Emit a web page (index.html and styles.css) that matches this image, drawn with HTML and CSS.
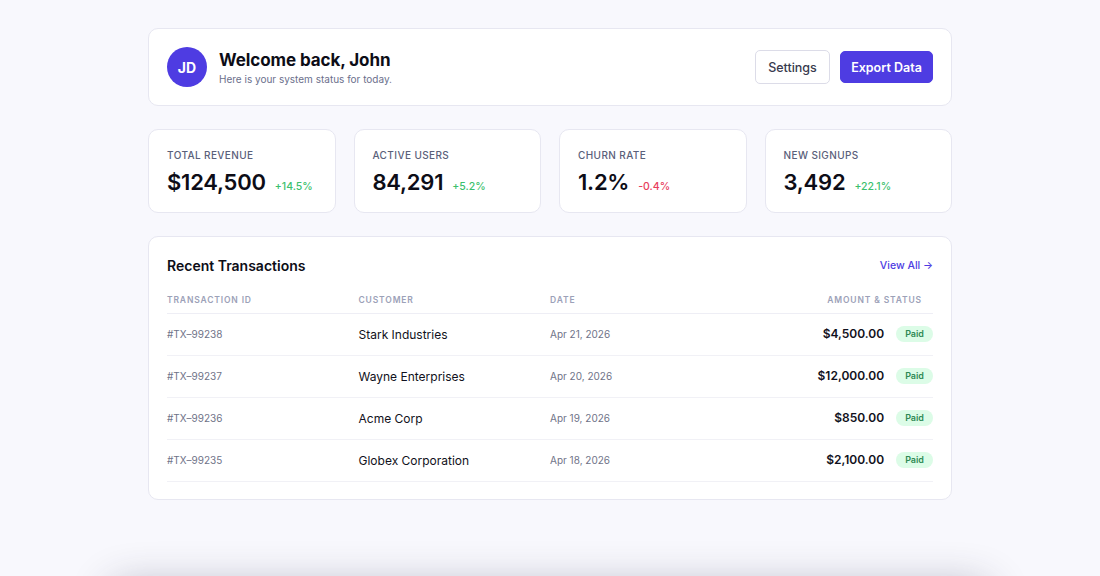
FILE: index.html
```html
<!DOCTYPE html>
<html>
<head>
<meta charset="utf-8">
<link rel="stylesheet" href="styles.css">
</head>
<body>
<main class="wrap">
  <header class="card header">
    <div class="who">
      <div class="avatar">JD</div>
      <div>
        <h1 class="title">Welcome back, John</h1>
        <p class="sub">Here is your system status for today.</p>
      </div>
    </div>
    <div class="actions">
      <button class="btn btn-ghost">Settings</button>
      <button class="btn btn-primary">Export Data</button>
    </div>
  </header>

  <section class="stats">
    <div class="card stat">
      <div class="label">Total Revenue</div>
      <div class="row"><span class="value">$124,500</span><span class="chg up">+14.5%</span></div>
    </div>
    <div class="card stat">
      <div class="label">Active Users</div>
      <div class="row"><span class="value">84,291</span><span class="chg up">+5.2%</span></div>
    </div>
    <div class="card stat">
      <div class="label">Churn Rate</div>
      <div class="row"><span class="value">1.2%</span><span class="chg down">-0.4%</span></div>
    </div>
    <div class="card stat">
      <div class="label">New Signups</div>
      <div class="row"><span class="value">3,492</span><span class="chg up">+22.1%</span></div>
    </div>
  </section>

  <section class="card tx">
    <div class="tx-head">
      <h2 class="tx-title">Recent Transactions</h2>
      <a class="link">View All →</a>
    </div>
    <table class="table">
      <thead>
        <tr><th>Transaction ID</th><th>Customer</th><th>Date</th><th class="th-r">Amount &amp; Status</th></tr>
      </thead>
      <tbody>
        <tr><td class="id">#TX–99238</td><td class="cust">Stark Industries</td><td class="date">Apr 21, 2026</td><td class="r"><span class="amt">$4,500.00</span><span class="pill">Paid</span></td></tr>
        <tr><td class="id">#TX–99237</td><td class="cust">Wayne Enterprises</td><td class="date">Apr 20, 2026</td><td class="r"><span class="amt">$12,000.00</span><span class="pill">Paid</span></td></tr>
        <tr><td class="id">#TX–99236</td><td class="cust">Acme Corp</td><td class="date">Apr 19, 2026</td><td class="r"><span class="amt">$850.00</span><span class="pill">Paid</span></td></tr>
        <tr><td class="id">#TX–99235</td><td class="cust">Globex Corporation</td><td class="date">Apr 18, 2026</td><td class="r"><span class="amt">$2,100.00</span><span class="pill">Paid</span></td></tr>
      </tbody>
    </table>
  </section>
</main>
<div class="below"></div>
</body>
</html>
```

FILE: styles.css
```css
* { box-sizing: border-box; }
html, body { margin: 0; padding: 0; }
body {
  background: #f8f8fd;
  font-family: Inter, "Noto Sans", sans-serif;
  color: #0f0f1a;
  overflow: hidden;
}
.wrap {
  width: 804px;
  margin: 28px auto 0;
  display: flex;
  flex-direction: column;
  gap: 23px;
}
.card {
  background: #fff;
  border: 1px solid #e7e7f1;
  border-radius: 10px;
}
.header {
  height: 78px;
  padding: 0 18px;
  display: flex;
  align-items: center;
  justify-content: space-between;
}
.who { display: flex; align-items: center; gap: 12px; }
.avatar {
  width: 40px; height: 40px; border-radius: 50%;
  background: #4e3ce2;
  color: #fff;
  font-weight: 700; font-size: 14px;
  display: flex; align-items: center; justify-content: center;
}
.title { margin: 0; font-size: 17px; font-weight: 700; line-height: 24px; color: #0d0d17; letter-spacing: -0.005em; }
.sub { margin: 0; font-size: 10px; color: #6b6f8c; line-height: 14px; }
.actions { display: flex; align-items: center; gap: 10px; }
.btn {
  font-family: inherit;
  font-size: 12.5px;
  border-radius: 5px;
  cursor: pointer;
}
.btn-ghost {
  height: 34px; width: 75px;
  background: #fff; border: 1px solid #dcdce8; color: #383a4e; font-weight: 500;
}
.btn-primary {
  height: 32px; width: 93px;
  background: #4e3ce2; border: 1px solid #4e3ce2; color: #fff; font-weight: 600;
}
.stats {
  display: grid;
  grid-template-columns: repeat(4, 1fr);
  gap: 18px;
}
.stat { height: 84px; padding: 18px 18px 0; }
.label {
  font-size: 10px; text-transform: uppercase; letter-spacing: 0.04em;
  color: #5a607a; font-weight: 500; line-height: 14px;
}
.row { display: flex; align-items: baseline; gap: 9px; margin-top: 6px; }
.value { font-size: 22px; font-weight: 600; color: #0d0d17; line-height: 28px; letter-spacing: -0.01em; }
.chg { font-size: 10.5px; font-weight: 500; }
.up { color: #3cbf6e; }
.down { color: #e83e5c; }
.tx { padding: 18px 18px 17px; }
.tx-head { display: flex; align-items: center; justify-content: space-between; height: 20px; }
.tx-title { margin: 0; font-size: 14px; font-weight: 600; color: #0d0d17; }
.link { font-size: 10.5px; color: #4e3ce2; font-weight: 500; }
.table { width: 100%; border-collapse: collapse; table-layout: fixed; margin-top: 8px; }
.table th {
  text-align: left; font-size: 8.5px; font-weight: 600; text-transform: uppercase;
  letter-spacing: 0.1em; color: #9ca1b8; height: 30px; padding: 4px 0 0;
  border-bottom: 1px solid #eeeef5;
}
.table th.th-r { text-align: right; padding-right: 11px; }
.table td {
  height: 42px; padding: 0; font-size: 12px; border-bottom: 1px solid #f1f1f6;
}
.r { text-align: right; }
.table td.id, .table td.date { font-size: 10px; color: #6f7388; }
.cust { color: #111120; font-weight: 400; }
.amt { font-weight: 600; color: #111120; font-size: 12px; }
.pill {
  display: inline-block; margin-left: 12px;
  background: #dcfce7; color: #2f8a55; font-size: 9px; font-weight: 600;
  padding: 0 9px; height: 16px; line-height: 16px; border-radius: 8px;
  vertical-align: 1px;
}
.below {
  width: 880px; height: 200px; margin: 84px auto 0;
  background: #fff; border-radius: 16px;
  box-shadow: 0 0 40px rgba(40, 40, 70, 0.3);
}
```
